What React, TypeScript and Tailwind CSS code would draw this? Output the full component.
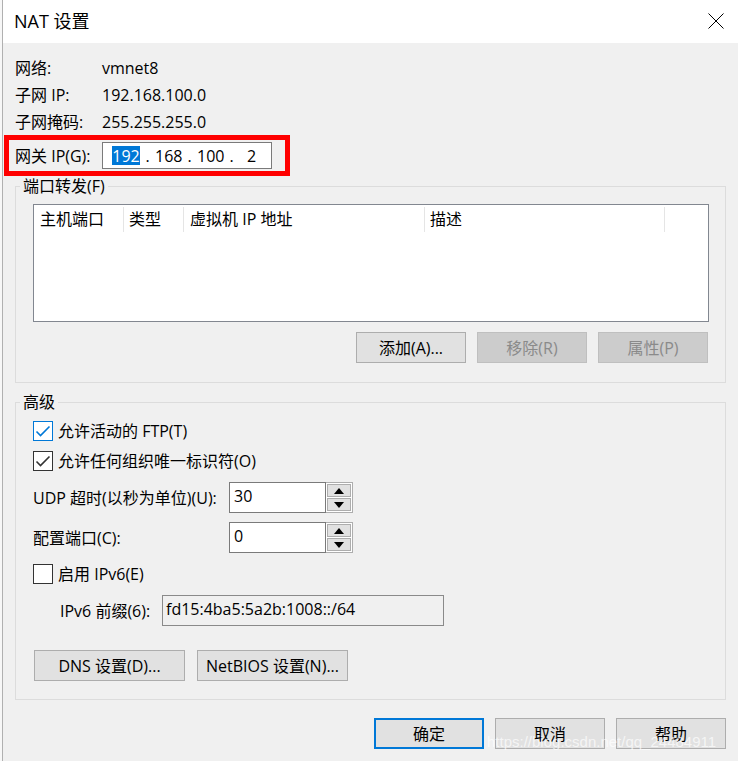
import React from "react";

const Btn = ({
  children,
  disabled,
  primary,
  w = "w-[110px]",
}: {
  children: React.ReactNode;
  disabled?: boolean;
  primary?: boolean;
  w?: string;
}) => (
  <div
    className={`${w} h-[31px] flex items-center justify-center ${
      primary
        ? "border-2 border-[#0078d7] bg-[#e1e1e1]"
        : disabled
        ? "border border-[#bfbfbf] bg-[#cccccc] text-[#8a8a8a]"
        : "border border-[#adadad] bg-[#e1e1e1]"
    }`}
  >
    {children}
  </div>
);

const Check = ({ checked, focus }: { checked?: boolean; focus?: boolean }) => (
  <div
    className={`w-[20px] h-[20px] border bg-white ${
      focus ? "border-[#0078d7]" : "border-[#333333]"
    }`}
  >
    {checked && (
      <svg width="18" height="18" viewBox="0 0 18 18">
        <path
          d="M2.5 9.5 L6.5 13.5 L15.5 4.5"
          fill="none"
          stroke={focus ? "#0078d7" : "#333333"}
          strokeWidth="1.6"
        />
      </svg>
    )}
  </div>
);

const Arrow = ({ up }: { up?: boolean }) => (
  <svg width="10" height="6" viewBox="0 0 10 6">
    <path d={up ? "M0 6 L5 0 L10 6 Z" : "M0 0 L5 6 L10 0 Z"} fill="#000" />
  </svg>
);

const Spinner = ({ value }: { value: string }) => (
  <div className="flex h-[31px]">
    <div className="w-[97px] h-full bg-white border border-[#7a7a7a] pl-[4px] pt-[2px] leading-[22px]">
      {value}
    </div>
    <div className="w-[27px] h-full bg-white border border-l-0 border-[#adadad] p-[1px] flex flex-col gap-[1px]">
      <div className="flex-1 bg-[#e1e1e1] border border-[#adadad] flex items-center justify-center">
        <Arrow up />
      </div>
      <div className="flex-1 bg-[#e1e1e1] border border-[#adadad] flex items-center justify-center">
        <Arrow />
      </div>
    </div>
  </div>
);

const Info = ({ label, value }: { label: string; value: string }) => (
  <div className="flex items-center h-[27px]">
    <div className="w-[87px]">{label}</div>
    <div>{value}</div>
  </div>
);

export default function App() {
  return (
    <div className="w-[738px] h-[761px] bg-[#f7f7f7] relative overflow-hidden text-[16px] text-black font-['Open_Sans','Noto_Sans_CJK_SC',sans-serif]">
      <div className="ml-[2px] h-full border-l border-[#b0b0b0] bg-[#f0f0f0] flex flex-col">
        {/* title bar */}
        <div className="h-[43px] bg-white flex items-center justify-between pl-[11px] pr-[14px] shrink-0">
          <span className="text-[18px] leading-none -mt-[2px]">NAT 设置</span>
          <svg width="16" height="16" viewBox="0 0 16 16" className="-mt-[2px]">
            <path d="M0.5 0.5 L15.5 15.5 M15.5 0.5 L0.5 15.5" stroke="#000" strokeWidth="1" />
          </svg>
        </div>

        <div className="flex flex-col pl-[12px] pr-[12px] pt-[11px]">
          <Info label="网络:" value="vmnet8" />
          <Info label="子网 IP:" value="192.168.100.0" />
          <Info label="子网掩码:" value="255.255.255.0" />

          {/* gateway */}
          <div className="-ml-[11px] w-[286px] h-[41px] border-[5px] border-[#ff0000] flex items-center pl-[6px]">
            <div className="w-[87px]">网关 IP(G):</div>
            <div className="w-[170px] h-[27px] bg-white border border-[#7a7a7a] flex items-center pl-[9px]">
              <span className="w-[28px] h-[19px] bg-[#0078d7] text-white flex items-center justify-center">192</span>
              <span className="w-[15px] text-center">.</span>
              <span className="w-[27px] text-center">168</span>
              <span className="w-[15px] text-center">.</span>
              <span className="w-[26px] text-center">100</span>
              <span className="w-[17px] text-center">.</span>
              <span className="w-[23px] text-center">2</span>
            </div>
          </div>

          {/* port forwarding */}
          <fieldset className="border border-[#dcdcdc] pb-[19px]">
            <legend className="ml-[4px] px-[3px] leading-[20px]">端口转发(F)</legend>
            <div className="mt-[8px] ml-[17px] w-[676px] h-[118px] bg-white border border-[#828790]">
              <div className="flex h-[27px] items-center">
                <div className="w-[90px] pl-[6px] h-[25px] mt-[2px] border-r border-[#e5e5e5] leading-[24px]">主机端口</div>
                <div className="w-[60px] pl-[5px] h-[25px] mt-[2px] border-r border-[#e5e5e5] leading-[24px]">类型</div>
                <div className="w-[241px] pl-[6px] h-[25px] mt-[2px] border-r border-[#e5e5e5] leading-[24px]">虚拟机 IP 地址</div>
                <div className="w-[240px] pl-[5px] h-[25px] mt-[2px] border-r border-[#e5e5e5] leading-[24px]">描述</div>
              </div>
            </div>
            <div className="mt-[10px] flex justify-end gap-[11px] pr-[17px]">
              <Btn>添加(A)...</Btn>
              <Btn disabled>移除(R)</Btn>
              <Btn disabled>属性(P)</Btn>
            </div>
          </fieldset>

          {/* advanced */}
          <fieldset className="mt-[9px] border border-[#dcdcdc] pb-[18px] pl-[17px]">
            <legend className="-ml-[13px] px-[3px] leading-[20px]">高级</legend>
            <div className="mt-[9px] flex items-center h-[20px] gap-[5px]">
              <Check checked focus />
              <span>允许活动的 FTP(T)</span>
            </div>
            <div className="mt-[10px] flex items-center h-[20px] gap-[5px]">
              <Check checked />
              <span>允许任何组织唯一标识符(O)</span>
            </div>
            <div className="mt-[11px] flex items-center">
              <div className="w-[196px]">UDP 超时(以秒为单位)(U):</div>
              <Spinner value="30" />
            </div>
            <div className="mt-[9px] flex items-center">
              <div className="w-[196px]">配置端口(C):</div>
              <Spinner value="0" />
            </div>
            <div className="mt-[11px] flex items-center h-[20px] gap-[5px]">
              <Check />
              <span>启用 IPv6(E)</span>
            </div>
            <div className="mt-[11px] flex items-center pl-[27px]">
              <div className="w-[102px]">IPv6 前缀(6):</div>
              <div className="w-[282px] h-[31px] border border-[#8a8a8a] pl-[3px] leading-[26px]">
                fd15:4ba5:5a2b:1008::/64
              </div>
            </div>
            <div className="mt-[24px] flex gap-[12px] pl-[1px]">
              <Btn w="w-[151px]">DNS 设置(D)...</Btn>
              <Btn w="w-[151px]">NetBIOS 设置(N)...</Btn>
            </div>
          </fieldset>

          <div className="mt-[18px] flex justify-end gap-[11px]">
            <Btn primary>确定</Btn>
            <Btn>取消</Btn>
            <Btn>帮助</Btn>
          </div>
        </div>
      </div>

      <span className="absolute left-[487px] top-[733px] text-[15px] leading-[18px] text-white/70 font-['Liberation_Sans',sans-serif] pointer-events-none">
        https://blog.csdn.net/qq_24484911
      </span>
    </div>
  );
}
